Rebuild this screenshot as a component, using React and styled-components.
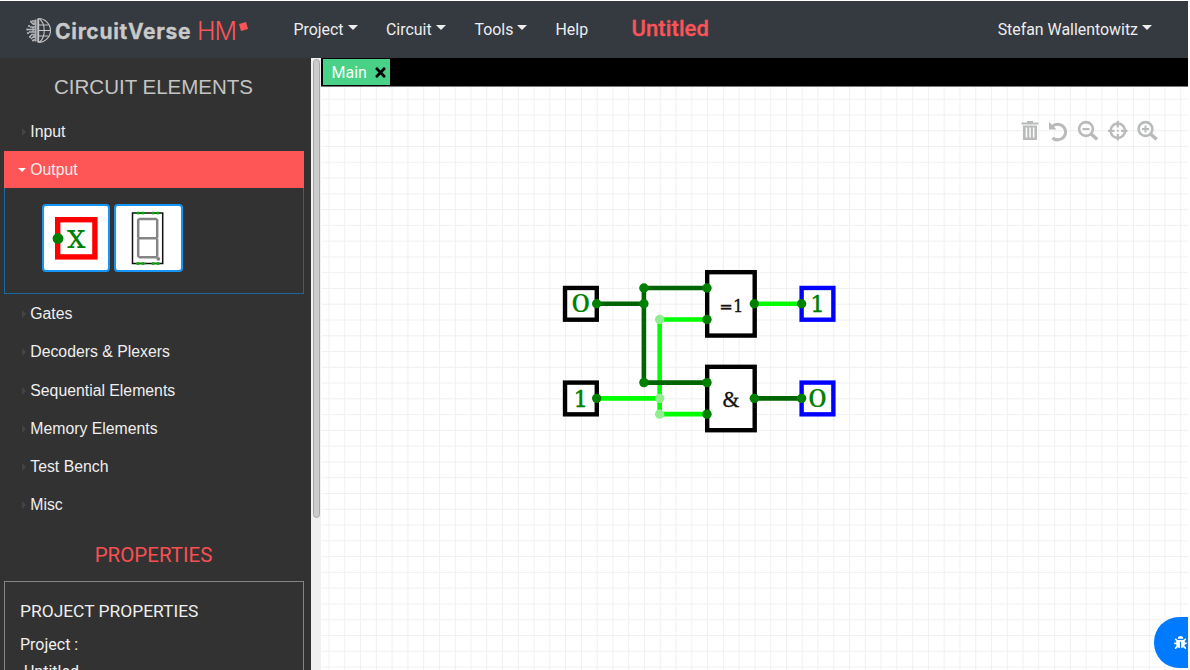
import React from 'react';
import styled, { createGlobalStyle } from 'styled-components';
import { FaBug, FaTimes } from 'react-icons/fa';

const Global = createGlobalStyle`
  * { box-sizing: border-box; }
  body { margin: 0; background: #fff; overflow: hidden; font-family: Roboto, sans-serif; }
`;
const Page = styled.div`
  display: flex; flex-direction: column; width: 1188px; height: 670px; padding-top: 1px; overflow: hidden;
`;
const Navbar = styled.header`
  display: flex; flex: none; align-items: center; height: 57px; padding: 0 36px 1px 26px; background: #343a40;
`;
const Brand = styled.div`display: flex; align-items: center; width: 267.5px; height: 56px; color: #c9c9c9;`;
const BrandName = styled.span`
  font: 700 21px Inter, sans-serif; letter-spacing: 0.7px; margin-left: 4px; width: 142px; white-space: nowrap; padding-top: 4px;
  -webkit-text-stroke: 0.3px #c9c9c9;
`;
const BrandSuffix = styled.span`font: 300 25px Inter, sans-serif; letter-spacing: -1px; color: #fc5458; width: 42px; padding-top: 3px;`;
const BrandMark = styled.svg`margin-top: -6px;`;
const NavItem = styled.div`
  display: flex; align-items: center; width: ${p => p.$w}px; color: #ededee; font-size: 15.9px; white-space: nowrap;
`;
const Caret = styled.i`
  border: 5px solid transparent; border-top-color: #ededee; border-bottom: 0; margin: -3px 0 0 4px;
`;
const Title = styled.div`color: #fc5458; font-size: 22px; font-weight: 500; letter-spacing: 0.1px; flex: 1; padding-bottom: 1px; -webkit-text-stroke: 0.3px #fc5458;`;
const Body = styled.div`display: flex; flex: 1; min-height: 0;`;
const Sidebar = styled.aside`
  width: 311px; flex: none; overflow: hidden; background: #323232; padding: 0 7.5px 0 3.6px; color: #efefef;
`;
const Heading = styled.h2`
  margin: 0; height: ${p => p.$h}px; line-height: ${p => p.$lh}px; text-align: center; font-weight: 400;
  font-size: 20.5px; color: ${p => p.$color}; font-family: ${p => p.$font};
`;
const Section = styled.div`
  display: flex; align-items: center; height: 36.3px; margin-bottom: ${p => (p.$open ? 0 : 2)}px; padding: 1px 0 0 ${p => (p.$open ? 14.4 : 18.4)}px;
  background: ${p => (p.$open ? '#fe5656' : 'transparent')};
  font: 15.8px "Liberation Sans", Arial, sans-serif;
`;
const Arrow = styled.i`
  border: 4px solid transparent; margin-right: 4.3px;
  ${p => (p.$open
    ? 'border-top-color: #fff; border-bottom: 0;'
    : 'border-left-color: #444; border-right: 0;')}
`;
const Panel = styled.div`
  display: flex; gap: 4px; height: 106.5px; margin-bottom: 1px; padding: 16px 0 0 37.4px; border: 1px solid #1b6a9f; border-top: 0;
`;
const ElementTile = styled.div`
  width: 68.4px; height: 68.6px; background: #fff; border: 2px solid #1595f5; border-radius: 4px;
`;
const Properties = styled.div`
  height: 120px; border: 1px solid #858585; padding: 15px 15.4px; font-size: 16px; line-height: 29px;
`;
const PropTitle = styled.div`font-size: 17.4px; height: 33px; line-height: 28px;`;
const PropLine = styled.div`height: 27px; line-height: 30px; padding-left: ${p => p.$indent || 0}px;`;
const Scroll = styled.div`width: 10px; flex: none; background: #f0f0f0; padding: 1px 0 0 2px;`;
const Thumb = styled.div`width: 7px; height: 459px; border: 1px solid #a7a7a7; background: #ccc; border-radius: 4px;`;
const Main = styled.main`display: flex; flex-direction: column; flex: 1; min-width: 0; position: relative;`;
const Tabs = styled.div`height: 29px; flex: none; background: #000; border-bottom: 1px solid #777; padding: 1px 0 0 2px;`;
const Tab = styled.div`
  display: flex; align-items: center; justify-content: space-between; width: 67.4px; height: 25.5px; padding: 2px 2px 0 8.5px;
  background: #49d287; color: #f5fff9; font-size: 16px; svg { color: #000; }
`;
const Canvas = styled.svg`display: block; width: 867px; height: 584px;`;
const Tools = styled.div`position: absolute; left: 699px; top: 61px; display: flex;`;
const Report = styled.div`
  position: absolute; right: 0; top: 559px; width: 34px; height: 51px; border-radius: 25px 0 0 25px; background: #007bff;
  color: #fff; display: flex; align-items: center; padding-left: 19.5px;
`;

const Globe = () => (
  <svg width="25" height="27" viewBox="0 -1 25 27" overflow="visible" fill="none" stroke="#c5c5c5" strokeWidth="1.1">
    <path d="M12.5 1.5A12 12 0 0 1 12.5 25.5M13 1.5c7 5 7 19 0 24M13 8h9.3M13 13.5h11M13 19h9.3" />
    <path d="M12.2 1.5v24" strokeWidth="1.9" /><path d="M9.7 2.5v22" strokeWidth="1.9" stroke="#a5a8aa" />
    <path d="M10 4H6M10 7H7L5 5M10 10H4M10 12.5H1M10 15H3M10 17.5H6l-2 2M10 20H7l-2 2M10 23H7M8 5v3M7 10v5M8 17v4" strokeWidth="1.3" stroke="#b4b6b8" />
    <g fill="#b9bbbc" stroke="none">
      <circle cx="5" cy="4.5" r="1" /><circle cx="3" cy="9" r="1.1" /><circle cx="1.2" cy="12.5" r="1" />
      <circle cx="2" cy="16" r="1.1" /><circle cx="4" cy="20" r="1.1" /><circle cx="7" cy="23.5" r="1" />
    </g>
  </svg>
);

const OutputIcon = () => (
  <svg width="65" height="65" viewBox="0 0 65 65">
    <rect x="13.7" y="13.7" width="37.2" height="37.2" fill="none" stroke="red" strokeWidth="5.4" />
    <circle cx="14" cy="32.5" r="5.4" fill="green" />
    <text x="32.3" y="41.5" textAnchor="middle" fontFamily="DejaVu Serif, serif" fontSize="33" fill="green" textLength="19" lengthAdjust="spacingAndGlyphs">x</text>
  </svg>
);

const SevenSegmentIcon = () => (
  <svg width="65" height="65" viewBox="0 0 65 65" fill="none">
    <rect x="16.5" y="7" width="30.2" height="50.5" stroke="#111" strokeWidth="1.5" />
    <path d="M20 7h10M36 7h8M20 57.5h10M36 57.5h8" stroke="green" strokeWidth="1.5" />
    <g fill="#13a313">
      {[22, 27, 37, 42].map(x => <React.Fragment key={x}><circle cx={x} cy="7" r="1.5" /><circle cx={x} cy="57.5" r="1.5" /></React.Fragment>)}
    </g>
    <path d="M23.5 13h16.5M23.5 32.2h16.5M23.5 51.2h16.5M22.2 14v17M41.2 14v17M22.2 33.5v16.5M41.2 33.5v16.5" stroke="#858585" strokeWidth="2.5" strokeLinecap="round" />
    <circle cx="42.3" cy="52.8" r="1.9" fill="#858585" />
  </svg>
);

const ToolIcons = () => (
  <svg width="142" height="24" viewBox="0 0 142 24" fill="none" stroke="#b9bbbb">
    <path d="M1.5 4.5h17" strokeWidth="2" /><path d="M7 3h6" strokeWidth="2" />
    <path fill="#b9bbbb" stroke="none" fillRule="evenodd" d="M3 6.5h14V21H3zM5.7 8.5v10h1.5v-10zm3.6 0v10h1.5v-10zm3.6 0v10h1.5v-10z" />
    <path d="M32 7.5a8 7.8 0 1 1 .5 11.5" strokeWidth="3.1" />
    <path d="M29 2.8v7.8h7.5z" fill="#b9bbbb" stroke="none" />
    <circle cx="66" cy="10" r="6.9" strokeWidth="2.6" /><path d="M71 15l6.2 5.4" strokeWidth="3.4" /><path d="M62.5 10h7" strokeWidth="2" />
    <circle cx="97.8" cy="11.8" r="7.2" strokeWidth="2.5" />
    <path d="M97.8 2v6.5M97.8 15.1v6.5M88 11.8h6.5M101.1 11.8h6.5" strokeWidth="2.2" /><circle cx="97.8" cy="11.8" r="1.1" fill="#b9bbbb" stroke="none" />
    <circle cx="125.5" cy="10" r="6.9" strokeWidth="2.6" /><path d="M130.5 15l6.2 5.4" strokeWidth="3.4" /><path d="M122 10h7M125.5 6.5v7" strokeWidth="2" />
  </svg>
);

const Digit = ({ x, y, v }) => (
  <text x={x} y={y} textAnchor="middle" fontFamily="DejaVu Serif, serif" fontSize={v === '0' ? 23.5 : 23} fill="green"
    stroke="green" strokeWidth={v === '0' ? 0.1 : 0.5}
    textLength={v === '0' ? 20 : 14.5} lengthAdjust="spacingAndGlyphs">{v}</text>
);
const inputs = [[580.5, 303.9, '0'], [580.5, 398.7, '1']];
const outputs = [[817.5, 303.9, '1'], [817.5, 398.7, '0']];
const pins = [[596.4, 303.9], [596.4, 398.7], [643.7, 288.1], [643.7, 303.9], [643.7, 382.9], [706.9, 288.1], [706.9, 319.7],
  [706.9, 382.9], [706.9, 414.5], [754.3, 303.9], [754.3, 398.7], [801.7, 303.9], [801.7, 398.7]];

const Circuit = () => (
  <Canvas viewBox="321 86.8 867 584">
    <defs>
      <pattern id="grid" x="596.4" y="303.9" width="15.8" height="15.8" patternUnits="userSpaceOnUse">
        <path d="M.5 0v15.8M0 .5h15.8" stroke="#f0f0f0" strokeWidth="1" />
      </pattern>
    </defs>
    <rect x="321" y="86" width="868" height="586" fill="url(#grid)" />
    <g fill="#fff" strokeWidth="4.4">
      {inputs.map(([x, y]) => <rect key={y} x={x - 15.8} y={y - 15.8} width="31.8" height="31.8" stroke="#000" />)}
      {outputs.map(([x, y]) => <rect key={y} x={x - 15.8} y={y - 15.8} width="31.8" height="31.8" stroke="#00f" />)}
      <rect x="707.1" y="272.3" width="47.6" height="63.5" stroke="#000" />
      <rect x="707.1" y="367.1" width="47.6" height="63.5" stroke="#000" />
    </g>
    <g fill="none" strokeWidth="4.6">
      <path d="M596.4 398.7H659.5M706.9 319.7H659.5V414.5H706.9M754.3 303.9H801.7" stroke="#0f0" />
      <path d="M596.4 303.9H643.7M706.9 288.1H643.7V382.9H706.9M754.3 398.7H801.7" stroke="#006400" />
    </g>
    {pins.map(([x, y]) => <circle key={`${x}-${y}`} cx={x} cy={y} r="4.7" fill="green" />)}
    {[319.7, 398.7, 414.5].map(y => <circle key={y} cx="659.5" cy={y} r="4.7" fill="#90ee90" />)}
    {[...inputs, ...outputs].map(([x, y, v]) => <Digit key={`${x}-${y}`} x={x} y={y + 8.5} v={v} />)}
    <g fontFamily="DejaVu Serif, serif" fill="#111" stroke="#111" strokeWidth="0.3" textAnchor="middle">
      <text x="731.3" y="312" fontSize="16.5" textLength="24" lengthAdjust="spacingAndGlyphs">=1</text>
      <text x="731" y="407" fontFamily="Liberation Serif, serif" fontSize="24" textLength="17" lengthAdjust="spacingAndGlyphs">&amp;</text>
    </g>
  </Canvas>
);

export default function App() {
  return (
    <Page>
      <Global />
      <Navbar>
        <Brand>
          <Globe /><BrandName>CircuitVerse</BrandName><BrandSuffix>HM</BrandSuffix>
          <BrandMark width="10" height="11"><path d="M0 3L7 1L9 8L2 10z" fill="#fc5458" /></BrandMark>
        </Brand>
        <NavItem $w={92.5}>Project<Caret /></NavItem>
        <NavItem $w={88.5}>Circuit<Caret /></NavItem>
        <NavItem $w={81}>Tools<Caret /></NavItem>
        <NavItem $w={76}>Help</NavItem>
        <Title>Untitled</Title>
        <NavItem>Stefan Wallentowitz<Caret /></NavItem>
      </Navbar>
      <Body>
        <Sidebar>
          <Heading $h={55.2} $lh={58} $color="#c4c4c4" $font='"Liberation Sans", Arial, sans-serif'>CIRCUIT ELEMENTS</Heading>
          <Section><Arrow />Input</Section>
          <Section $open><Arrow $open />Output</Section>
          <Panel>
            <ElementTile><OutputIcon /></ElementTile>
            <ElementTile><SevenSegmentIcon /></ElementTile>
          </Panel>
          {['Gates', 'Decoders & Plexers', 'Sequential Elements', 'Memory Elements', 'Test Bench', 'Misc'].map(name => (
            <Section key={name}><Arrow />{name}</Section>
          ))}
          <Heading $h={56.3} $lh={60} $color="#f65053" $font="Roboto, sans-serif">PROPERTIES</Heading>
          <Properties>
            <PropTitle>PROJECT PROPERTIES</PropTitle>
            <PropLine>Project :</PropLine>
            <PropLine $indent={4}>Untitled</PropLine>
          </Properties>
        </Sidebar>
        <Scroll><Thumb /></Scroll>
        <Main>
          <Tabs><Tab>Main<FaTimes size={15} /></Tab></Tabs>
          <Circuit />
          <Tools><ToolIcons /></Tools>
          <Report><FaBug size={13} /></Report>
        </Main>
      </Body>
    </Page>
  );
}
